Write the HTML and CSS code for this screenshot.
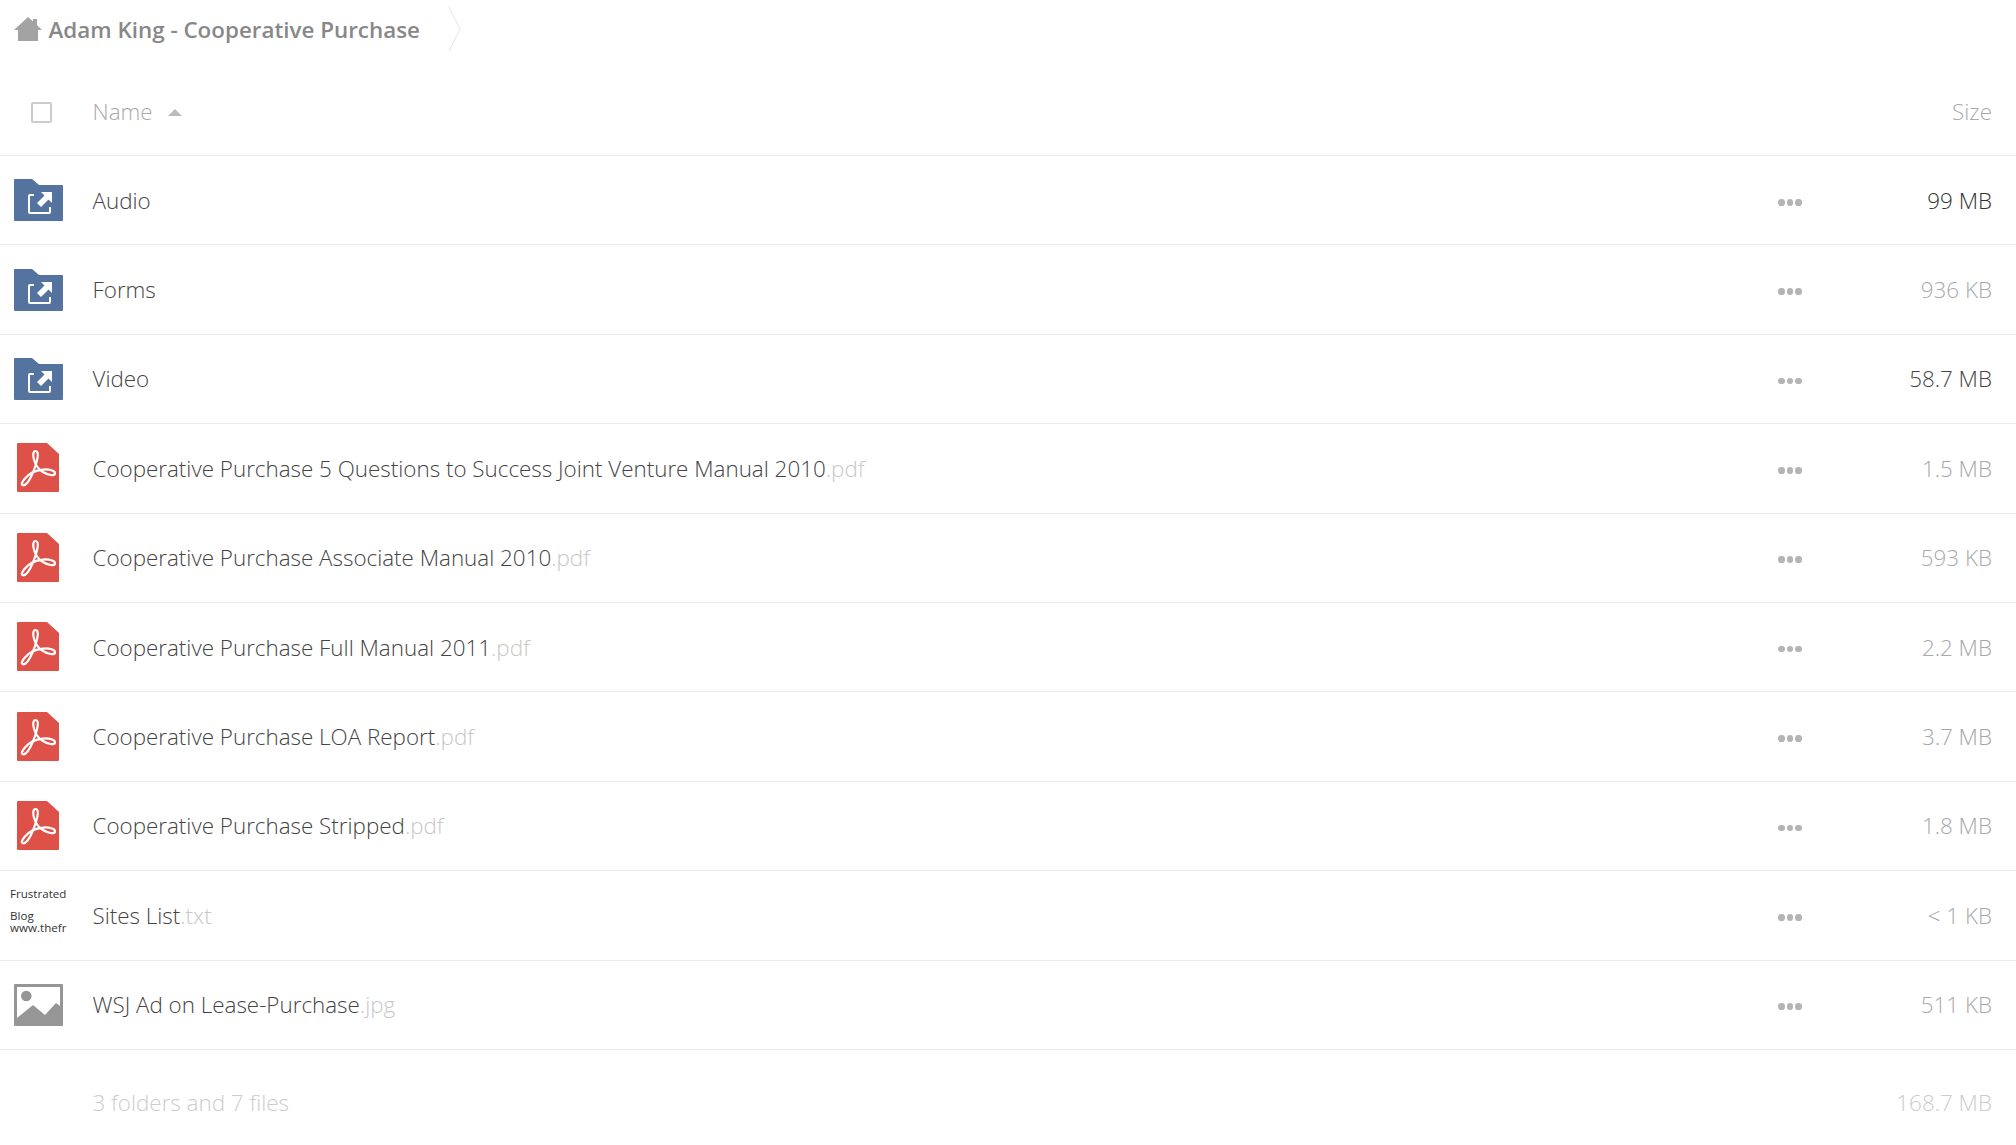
FILE: index.html
```html
<!DOCTYPE html>
<html lang="en">
<head>
    <meta charset="UTF-8">
    <title>Adam King - Cooperative Purchase</title>
    <link rel="stylesheet" href="styles.css">
</head>
<body>

    <svg class="icon-defs" width="0" height="0">
        <defs>
            <symbol id="icon-folder" viewBox="0 0 49 42">
                <path fill="#54739e" d="M1 0H18L25 6H48a1 1 0 0 1 1 1V41a1 1 0 0 1-1 1H1a1 1 0 0 1-1-1V1a1 1 0 0 1 1-1Z"/>
                <path fill="none" stroke="#fff" stroke-width="2" d="M20 16H16a1 1 0 0 0-1 1V33a1 1 0 0 0 1 1H35a1 1 0 0 0 1-1V28"/>
                <path fill="#fff" d="M27 13H38V24L34.500 20.500 27 28 23 24 30.500 16.500Z"/>
            </symbol>
            <symbol id="icon-pdf" viewBox="0 0 42 49">
                <path fill="#dd5149" d="M1 0H30L42 11V48a1 1 0 0 1-1 1H1a1 1 0 0 1-1-1V1a1 1 0 0 1 1-1Z"/>
                <path fill="none" stroke="#fff" stroke-width="2.200" stroke-linejoin="round" d="M18.500 8C16 8 15.800 12 16.800 16 18.300 22 21.500 26.500 26 29 30.500 32 37.500 33.500 38 30.500 38.500 27.500 32 26 26 26.600 18 27.300 11 31.500 7.500 36 4.500 39.800 3.800 42.300 6.500 42.300 9.500 42.300 13 36.500 16 29.500 18.500 23 20.500 17 20.800 12.500 20.900 10 20.500 8 18.500 8Z"/>
            </symbol>
        </defs>
    </svg>

    <div class="breadcrumb">
        <svg class="home-icon" viewBox="0 0 28 24">
            <path fill="#a3a3a3" d="M14 0 19 4.500V2H23V8L28 13H24V24H4V13H0Z"/>
        </svg>
        <span class="crumb-name">Adam King - Cooperative Purchase</span>
        <svg class="crumb-sep" viewBox="0 0 13 44">
            <path fill="none" stroke="#e4e4e4" d="M1 0 12 22 1 44"/>
        </svg>
    </div>

    <div class="file-list">
        <div class="list-head">
            <div class="col-icon"><span class="checkbox"></span></div>
            <div class="col-name">Name <span class="sort-arrow"></span></div>
            <div class="col-size">Size</div>
        </div>

        <div class="file-row">
            <div class="col-icon"><svg class="folder-icon"><use href="#icon-folder"/></svg></div>
            <div class="col-name">Audio</div>
            <div class="col-actions"><i></i><i></i><i></i></div>
            <div class="col-size" style="color: #333">99 MB</div>
        </div>
        <div class="file-row">
            <div class="col-icon"><svg class="folder-icon"><use href="#icon-folder"/></svg></div>
            <div class="col-name">Forms</div>
            <div class="col-actions"><i></i><i></i><i></i></div>
            <div class="col-size" style="color: #aaa">936 KB</div>
        </div>
        <div class="file-row">
            <div class="col-icon"><svg class="folder-icon"><use href="#icon-folder"/></svg></div>
            <div class="col-name">Video</div>
            <div class="col-actions"><i></i><i></i><i></i></div>
            <div class="col-size" style="color: #444">58.7 MB</div>
        </div>
        <div class="file-row">
            <div class="col-icon"><svg class="pdf-icon"><use href="#icon-pdf"/></svg></div>
            <div class="col-name">Cooperative Purchase 5 Questions to Success Joint Venture Manual 2010<span class="ext">.pdf</span></div>
            <div class="col-actions"><i></i><i></i><i></i></div>
            <div class="col-size" style="color: #a8a8a8">1.5 MB</div>
        </div>
        <div class="file-row">
            <div class="col-icon"><svg class="pdf-icon"><use href="#icon-pdf"/></svg></div>
            <div class="col-name">Cooperative Purchase Associate Manual 2010<span class="ext">.pdf</span></div>
            <div class="col-actions"><i></i><i></i><i></i></div>
            <div class="col-size" style="color: #aaa">593 KB</div>
        </div>
        <div class="file-row">
            <div class="col-icon"><svg class="pdf-icon"><use href="#icon-pdf"/></svg></div>
            <div class="col-name">Cooperative Purchase Full Manual 2011<span class="ext">.pdf</span></div>
            <div class="col-actions"><i></i><i></i><i></i></div>
            <div class="col-size" style="color: #a8a8a8">2.2 MB</div>
        </div>
        <div class="file-row">
            <div class="col-icon"><svg class="pdf-icon"><use href="#icon-pdf"/></svg></div>
            <div class="col-name">Cooperative Purchase LOA Report<span class="ext">.pdf</span></div>
            <div class="col-actions"><i></i><i></i><i></i></div>
            <div class="col-size" style="color: #a6a6a6">3.7 MB</div>
        </div>
        <div class="file-row">
            <div class="col-icon"><svg class="pdf-icon"><use href="#icon-pdf"/></svg></div>
            <div class="col-name">Cooperative Purchase Stripped<span class="ext">.pdf</span></div>
            <div class="col-actions"><i></i><i></i><i></i></div>
            <div class="col-size" style="color: #a8a8a8">1.8 MB</div>
        </div>
        <div class="file-row">
            <div class="col-icon">
                <div class="txt-thumb">
                    <p>Frustrated</p>
                    <p class="txt-gap">Blog</p>
                    <p>www.thefr</p>
                </div>
            </div>
            <div class="col-name">Sites List<span class="ext">.txt</span></div>
            <div class="col-actions"><i></i><i></i><i></i></div>
            <div class="col-size" style="color: #aaa">&lt; 1 KB</div>
        </div>
        <div class="file-row">
            <div class="col-icon">
                <svg class="image-icon" viewBox="0 0 49 42">
                    <rect width="49" height="42" rx="1" fill="#969696"/>
                    <rect x="3" y="3" width="43" height="36" fill="#fff"/>
                    <circle cx="12.300" cy="12" r="5.300" fill="#969696"/>
                    <path fill="#969696" d="M3 34 19 21 31 31 42 19 46 22V39H3Z"/>
                </svg>
            </div>
            <div class="col-name">WSJ Ad on Lease-Purchase<span class="ext">.jpg</span></div>
            <div class="col-actions"><i></i><i></i><i></i></div>
            <div class="col-size" style="color: #aaa">511 KB</div>
        </div>

        <div class="list-foot">
            <div class="col-icon"></div>
            <div class="col-name">3 folders and 7 files</div>
            <div class="col-size">168.7 MB</div>
        </div>
    </div>

</body>
</html>
```
FILE: styles.css
```css
html, body { margin: 0; padding: 0; background: #fff; }
body { font-family: "Open Sans", "Liberation Sans", sans-serif; font-size: 22.4px; font-weight: 300; color: #444; overflow: hidden; }
.icon-defs { display: block; height: 0; }

.breadcrumb { display: flex; align-items: center; height: 58px; padding-left: 14px; }
.home-icon { width: 28px; height: 24px; flex: none; }
.crumb-name { margin-left: 6.500px; font-weight: 600; color: #888; white-space: nowrap; }
.crumb-sep { width: 13px; height: 44px; margin-left: 28px; margin-top: -1px; }

.file-list { display: flex; flex-direction: column; }
.list-head { display: flex; align-items: center; height: 98px; padding-top: 9px; box-sizing: border-box; border-bottom: 1px solid #ededed; color: #aaa; }
.file-row { display: flex; align-items: center; height: 89.400px; box-sizing: border-box; border-bottom: 1px solid #ededed; }
.list-foot { display: flex; align-items: center; height: 105px; color: #ccc; }

.col-icon { flex: none; width: 92px; display: flex; justify-content: center; padding-right: 16px; box-sizing: border-box; }
.col-name { flex: 1; white-space: nowrap; min-width: 0; padding-left: 0.500px; }
.col-actions { flex: none; width: 24px; display: flex; gap: 2px; margin-top: 4px; }
.col-actions i { display: block; width: 6.700px; height: 6.700px; border-radius: 50%; background: #b4b4b4; }
.col-size { flex: none; width: 190px; margin-right: 24px; text-align: right; white-space: nowrap; }

.checkbox { display: block; width: 21px; height: 21px; box-sizing: border-box; border: 2px solid #ccc; border-radius: 2px; margin-left: 7px; margin-top: 2px; }
.sort-arrow { display: inline-block; margin-left: 10px; vertical-align: 4px; border-left: 7px solid transparent; border-right: 7px solid transparent; border-bottom: 7px solid #bbb; }
.ext { color: #c8c8c8; }

.folder-icon { display: block; width: 49px; height: 42px; }
.pdf-icon { display: block; width: 42px; height: 49px; margin-top: -1px; }
.image-icon { display: block; width: 49px; height: 42px; }

.txt-thumb { width: 56px; height: 56px; margin-top: 1px; font-size: 11.600px; font-weight: 400; color: #333; white-space: nowrap; line-height: 12px; }
.txt-thumb p { margin: 0; }
.txt-thumb .txt-gap { margin-top: 10px; }
```
